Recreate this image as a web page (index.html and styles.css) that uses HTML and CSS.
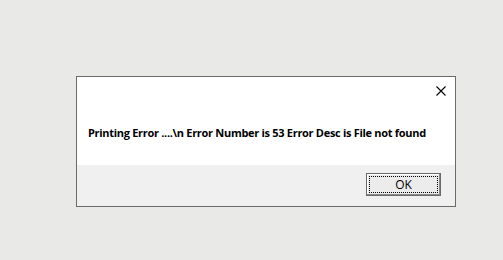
FILE: index.html
```html
<!DOCTYPE html>
<html lang="en">
<head>
    <meta charset="UTF-8">
    <title>Printing Error</title>
    <link rel="stylesheet" href="styles.css">
</head>
<body>
    <div class="dialog">
        <div class="dialog-main">
            <div class="title-row">
                <svg class="close" width="10" height="10" viewBox="0 0 10 10">
                    <path d="M0.5 0.5 L9.5 9.5 M9.5 0.5 L0.5 9.5" stroke="#000" stroke-width="1.1" fill="none"/>
                </svg>
            </div>
            <p class="message">Printing Error ....\n Error Number is 53 Error Desc is File not found</p>
        </div>
        <div class="dialog-footer">
            <button class="ok-button"><span class="focus-ring">OK</span></button>
        </div>
    </div>
</body>
</html>
```

FILE: styles.css
```css
body {
    margin: 0;
    padding: 0;
    background-color: #e9e9e7;
    font-family: "Open Sans", "Noto Sans", sans-serif;
}

.dialog {
    box-sizing: border-box;
    width: 380px;
    margin: 76px 0 0 76px;
    border: 1px solid #6b6b6b;
    background-color: #fff;
}

.dialog-main {
    height: 88px;
    display: flex;
    flex-direction: column;
}

.title-row {
    display: flex;
    justify-content: flex-end;
    padding: 9px 9px 0 0;
}

.close {
    display: block;
}

.message {
    margin: 29px 0 0 11px;
    font-size: 11px;
    font-weight: bold;
    letter-spacing: -0.3px;
    line-height: 16px;
    white-space: nowrap;
    color: #000;
}

.dialog-footer {
    height: 41px;
    background-color: #f0f0f0;
    display: flex;
    justify-content: flex-end;
    align-items: flex-start;
    padding: 8px 14px 0 0;
    box-sizing: border-box;
}

.ok-button {
    box-sizing: border-box;
    width: 75px;
    height: 23px;
    padding: 2px;
    border: 1px solid #6a6a6a;
    box-shadow: inset -1px -1px 0 #8a8a8a, inset 1px 1px 0 #fff;
    background-color: #ececec;
    font-family: "Open Sans", "Noto Sans", sans-serif;
    font-size: 12px;
    color: #000;
    display: flex;
}

.focus-ring {
    flex: 1;
    border: 1px dotted #000;
    display: flex;
    align-items: center;
    justify-content: center;
    line-height: 1;
}
```
